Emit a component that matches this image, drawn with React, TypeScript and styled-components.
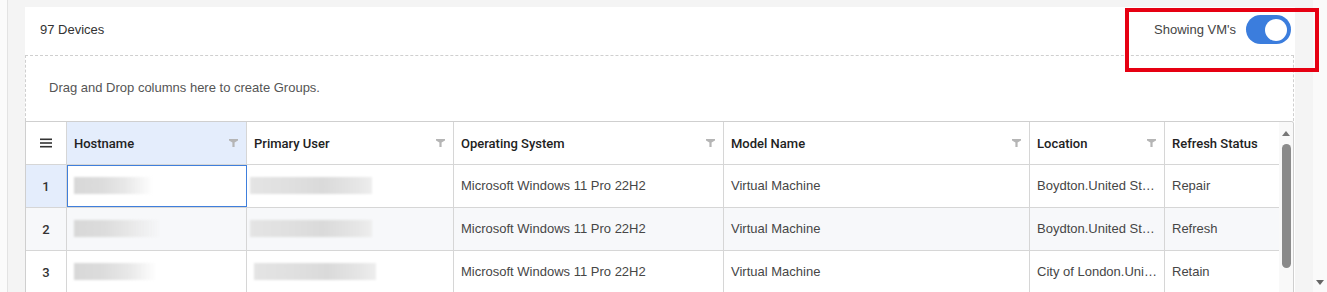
import React from "react";
import styled, { createGlobalStyle } from "styled-components";

const GlobalStyle = createGlobalStyle`
  html, body { margin: 0; padding: 0; }
  body {
    font-family: "Liberation Sans", Arial, sans-serif;
    background: #fbfbfb;
  }
  * { box-sizing: border-box; }
`;

const Page = styled.div`
  position: relative;
  display: flex;
  width: 1327px;
  height: 292px;
  overflow: hidden;
  padding-left: 7px;
  background: #fbfbfb;
`;

const Frame = styled.div`
  flex: 1;
  min-width: 0;
  display: flex;
  flex-direction: column;
  border-left: 1px solid #e3e3e3;
  background: #f4f4f4;
  padding: 7px 18px 0 17px;
`;

const PageScroll = styled.div`
  width: 14px;
  background: #fafafa;
  display: flex;
  flex-direction: column;
  justify-content: flex-end;
  align-items: center;
  padding-bottom: 7px;
`;

const Card = styled.section`
  flex: 1;
  min-height: 0;
  background: #fff;
  display: flex;
  flex-direction: column;
`;

const CardHeader = styled.header`
  height: 48px;
  flex-shrink: 0;
  display: flex;
  align-items: center;
  justify-content: space-between;
  padding: 0 4px 3px 15px;
`;

const Count = styled.span`
  font-size: 13px;
  color: #333;
`;

const ToggleGroup = styled.label`
  display: flex;
  align-items: center;
  gap: 10px;
  font-size: 13px;
  color: #444;
`;

const Switch = styled.span<{ $on: boolean }>`
  width: 45px;
  height: 29px;
  border-radius: 15px;
  background: ${(p) => (p.$on ? "#3b7ddd" : "#c8c8c8")};
  display: flex;
  align-items: center;
  justify-content: ${(p) => (p.$on ? "flex-end" : "flex-start")};
  padding: 0 4px;
`;

const Knob = styled.span`
  width: 22px;
  height: 22px;
  border-radius: 50%;
  background: #fff;
`;

const GroupPanel = styled.div`
  height: 66px;
  flex-shrink: 0;
  margin-right: 1px;
  border: 1px dashed #cfcfcf;
  border-bottom: none;
  display: flex;
  align-items: center;
  padding: 0 0 3px 23px;
  font-size: 13px;
  color: #555;
`;

const Grid = styled.div`
  flex: 1;
  min-height: 0;
  margin-right: 1px;
  border: 1px solid #cfcfcf;
  border-bottom: none;
  border-radius: 0 3px 0 0;
  display: flex;
  overflow: hidden;
`;

const Rows = styled.div`
  width: 1253px;
  display: flex;
  flex-direction: column;
`;

const Row = styled.div<{ $striped?: boolean }>`
  display: grid;
  grid-template-columns: 41px 180px 207px 270px 306px 135px 114px;
  height: 43px;
  flex-shrink: 0;
  border-bottom: 1px solid #d6d6d6;
  background: ${(p) => (p.$striped ? "#f7f8fa" : "#fff")};
`;

const HeaderCell = styled.div<{ $active?: boolean }>`
  display: flex;
  align-items: center;
  justify-content: space-between;
  min-width: 0;
  padding: 0 8px 0 7px;
  border-right: 1px solid #d6d6d6;
  background: ${(p) => (p.$active ? "#e4edfc" : "transparent")};
  font-family: Roboto, "Liberation Sans", Arial, sans-serif;
  font-weight: 500;
  font-size: 13px;
  color: #222;
  white-space: nowrap;
  &:last-child { border-right: none; }
`;

const Cell = styled.div<{ $focused?: boolean }>`
  display: flex;
  align-items: center;
  min-width: 0;
  padding: 0 6px 1px 7px;
  border-right: 1px solid #d6d6d6;
  font-size: 13px;
  color: #464646;
  white-space: nowrap;
  outline: ${(p) => (p.$focused ? "1px solid #3f7fdc" : "none")};
  outline-offset: -1px;
  background: ${(p) => (p.$focused ? "#fff" : "transparent")};
  &:last-child { border-right: none; }
`;

const NumberCell = styled.div<{ $active?: boolean }>`
  display: flex;
  align-items: center;
  justify-content: center;
  border-right: 1px solid #d6d6d6;
  background: ${(p) => (p.$active ? "#e4edfc" : "transparent")};
  font-family: Roboto, "Liberation Sans", Arial, sans-serif;
  font-weight: 500;
  font-size: 13px;
  color: #333;
`;

const Ellipsis = styled.span`
  overflow: hidden;
  text-overflow: ellipsis;
  white-space: nowrap;
`;

const Redacted = styled.span<{ $w: number; $x: number; $kind: "fade" | "bar" }>`
  display: block;
  flex-shrink: 0;
  width: ${(p) => p.$w}px;
  height: 17px;
  margin-left: ${(p) => p.$x}px;
  background: ${(p) =>
    p.$kind === "fade"
      ? "linear-gradient(90deg, #d8d8d8 0%, #dcdcdc 35%, #e8e8e8 65%, rgba(245,245,245,0) 100%)"
      : "linear-gradient(90deg, #e4e4e4 0%, #e0e0e0 30%, #dadada 60%, #e6e6e6 88%, #eeeeee 100%)"};
  filter: blur(0.8px);
`;

const VScroll = styled.div`
  width: 14px;
  background: #f9f9f9;
  display: flex;
  flex-direction: column;
  align-items: center;
  padding-top: 9px;
  gap: 8px;
`;

const Thumb = styled.div`
  width: 9px;
  height: 124px;
  border-radius: 5px;
  background: #8a8a8a;
  flex-shrink: 0;
`;

const Annotation = styled.div`
  position: absolute;
  left: 1125px;
  top: 8px;
  width: 194px;
  height: 64px;
  border: 4px solid #e60012;
  pointer-events: none;
`;

const FilterIcon = () => (
  <svg width="9" height="8" viewBox="0 0 9 8">
    <path d="M0 0H9V1.5L5.6 3.6V8H3.4V3.6L0 1.5Z" fill="#b5b5b5" />
  </svg>
);

const MenuIcon = () => (
  <svg width="12" height="10" viewBox="0 0 12 10">
    <rect x="0" y="0.5" width="12" height="1.6" fill="#333" />
    <rect x="0" y="4.2" width="12" height="1.6" fill="#333" />
    <rect x="0" y="7.9" width="12" height="1.6" fill="#333" />
  </svg>
);

const Arrow = ({ dir, color = "#777" }: { dir: "up" | "down"; color?: string }) => (
  <svg width="8" height="5" viewBox="0 0 8 5">
    <path d={dir === "up" ? "M4 0L8 5H0Z" : "M0 0H8L4 5Z"} fill={color} />
  </svg>
);

const columns = [
  { title: "Hostname", filter: true, active: true },
  { title: "Primary User", filter: true },
  { title: "Operating System", filter: true },
  { title: "Model Name", filter: true },
  { title: "Location", filter: true },
  { title: "Refresh Status", filter: false },
];

const rows = [
  { n: 1, host: 79, user: 122, userX: -4, os: "Microsoft Windows 11 Pro 22H2", model: "Virtual Machine", location: "Boydton.United States", status: "Repair" },
  { n: 2, host: 87, user: 122, userX: -4, os: "Microsoft Windows 11 Pro 22H2", model: "Virtual Machine", location: "Boydton.United States", status: "Refresh" },
  { n: 3, host: 83, user: 122, userX: 0, os: "Microsoft Windows 11 Pro 22H2", model: "Virtual Machine", location: "City of London.United Kingdom", status: "Retain" },
];

export default function App() {
  return (
    <>
      <GlobalStyle />
      <Page>
        <Frame>
          <Card>
            <CardHeader>
              <Count>97 Devices</Count>
              <ToggleGroup>
                Showing VM's
                <Switch $on>
                  <Knob />
                </Switch>
              </ToggleGroup>
            </CardHeader>
            <GroupPanel>Drag and Drop columns here to create Groups.</GroupPanel>
            <Grid>
              <Rows>
                <Row>
                  <NumberCell>
                    <MenuIcon />
                  </NumberCell>
                  {columns.map((c) => (
                    <HeaderCell key={c.title} $active={c.active}>
                      <span>{c.title}</span>
                      {c.filter && <FilterIcon />}
                    </HeaderCell>
                  ))}
                </Row>
                {rows.map((r, i) => (
                  <Row key={r.n} $striped={i % 2 === 1}>
                    <NumberCell $active={i === 0}>{r.n}</NumberCell>
                    <Cell $focused={i === 0}>
                      <Redacted $w={r.host} $x={0} $kind="fade" />
                    </Cell>
                    <Cell>
                      <Redacted $w={r.user} $x={r.userX} $kind="bar" />
                    </Cell>
                    <Cell>{r.os}</Cell>
                    <Cell>{r.model}</Cell>
                    <Cell>
                      <Ellipsis>{r.location}</Ellipsis>
                    </Cell>
                    <Cell>{r.status}</Cell>
                  </Row>
                ))}
              </Rows>
              <VScroll>
                <Arrow dir="up" />
                <Thumb />
              </VScroll>
            </Grid>
          </Card>
        </Frame>
        <PageScroll>
          <Arrow dir="down" color="#666" />
        </PageScroll>
        <Annotation />
      </Page>
    </>
  );
}
